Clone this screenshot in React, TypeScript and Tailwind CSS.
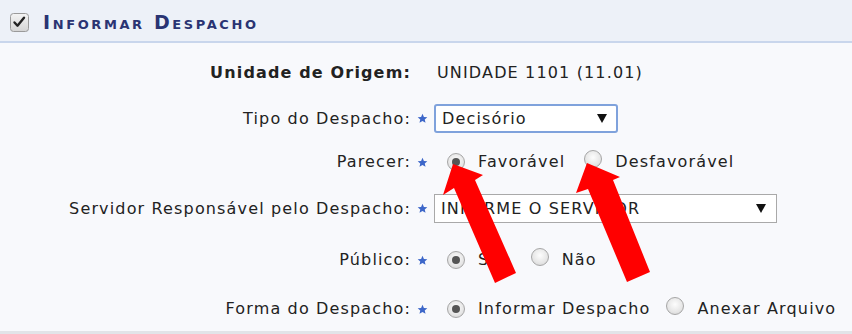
import React from "react";

const font = { fontFamily: '"DejaVu Sans", Verdana, sans-serif' };

function Star() {
  return (
    <svg width="11" height="11" viewBox="0 0 24 24" className="shrink-0">
      <path
        d="M12 1.5l3.1 7 7.4.6-5.6 4.9 1.7 7.4L12 17.5l-6.6 3.9 1.7-7.4L1.5 9.1l7.4-.6z"
        fill="#3d67c9"
      />
    </svg>
  );
}

function Radio({ checked }: { checked?: boolean }) {
  return (
    <span className="relative inline-flex h-[18px] w-[18px] shrink-0 items-center justify-center rounded-full border border-[#a6a6a6] bg-[radial-gradient(circle_at_50%_40%,#fdfdfd_0%,#e6e6e6_60%,#cfcfcf_100%)]">
      {checked && <span className="h-[8px] w-[8px] rounded-full bg-[#555]" />}
    </span>
  );
}

function Caret() {
  return (
    <svg width="10" height="9" viewBox="0 0 10 9" className="shrink-0">
      <path d="M0 0h10L5 9z" fill="#111" />
    </svg>
  );
}

function Row({
  label,
  h,
  bold,
  star = true,
  children,
}: {
  label: string;
  h: string;
  bold?: boolean;
  star?: boolean;
  children: React.ReactNode;
}) {
  return (
    <div className={`flex items-center ${h}`}>
      <div
        className={`w-[411px] shrink-0 text-right ${bold ? "font-bold" : ""}`}
      >
        {label}
      </div>
      <div className="flex w-[23px] shrink-0 items-center justify-center">
        {star && <Star />}
      </div>
      <div className="flex items-center">{children}</div>
    </div>
  );
}

export default function App() {
  return (
    <div
      className="relative h-[334px] w-[852px] overflow-hidden bg-[#f8f9fc] text-[16px] tracking-[1.15px] text-[#222]"
      style={font}
    >
      <div className="flex h-[43px] items-center border-b-2 border-[#c9d6ec] bg-[#edf1f8] pl-[10px] pt-[3px]">
        <svg width="19" height="19" viewBox="0 0 19 19" className="shrink-0">
          <defs>
            <linearGradient id="cb" x1="0" y1="0" x2="0" y2="1">
              <stop offset="0" stopColor="#f4f4f4" />
              <stop offset="1" stopColor="#d4d4d4" />
            </linearGradient>
          </defs>
          <rect x="0.5" y="0.5" width="18" height="18" rx="3" fill="url(#cb)" stroke="#9a9a9a" />
          <path d="M4.5 9.5l3 3.2 6.5-8" fill="none" stroke="#222" strokeWidth="2.4" strokeLinecap="round" strokeLinejoin="round" />
        </svg>
        <span className="ml-[14px] text-[19px] font-bold tracking-[2.6px] text-[#2a3473] [font-variant:small-caps]">
          Informar Despacho
        </span>
      </div>

      <div className="pt-[8px]">
        <Row label="Unidade de Origem:" h="h-[44px]" bold star={false}>
          <span className="ml-[3px]">UNIDADE 1101 (11.01)</span>
        </Row>
        <Row label="Tipo do Despacho:" h="h-[47px]">
          <div className="flex h-[29px] w-[184px] items-center justify-between rounded-[3px] border-2 border-[#7fa2dc] bg-white pl-[6px] pr-[9px]">
            <span>Decisório</span>
            <Caret />
          </div>
        </Row>
        <Row label="Parecer:" h="h-[40px]">
          <span className="ml-[13px] flex items-center">
            <Radio checked />
            <span className="ml-[13px]">Favorável</span>
            <span className="ml-[19px]">
              <Radio />
            </span>
            <span className="ml-[13px]">Desfavorável</span>
          </span>
        </Row>
        <Row label="Servidor Responsável pelo Despacho:" h="h-[53px]">
          <div className="flex h-[29px] w-[343px] items-center justify-between border border-[#a9a9a9] bg-white pl-[6px] pr-[10px]">
            <span>INFORME O SERVIDOR</span>
            <Caret />
          </div>
        </Row>
        <Row label="Público:" h="h-[50px]">
          <span className="ml-[13px] flex items-center">
            <Radio checked />
            <span className="ml-[13px]">Sim</span>
            <span className="ml-[19px]">
              <Radio />
            </span>
            <span className="ml-[13px]">Não</span>
          </span>
        </Row>
        <Row label="Forma do Despacho:" h="h-[48px]">
          <span className="ml-[13px] flex items-center">
            <Radio checked />
            <span className="ml-[13px]">Informar Despacho</span>
            <span className="ml-[16px]">
              <Radio />
            </span>
            <span className="ml-[13px]">Anexar Arquivo</span>
          </span>
        </Row>
      </div>
      <div className="absolute bottom-0 left-0 h-[3px] w-full bg-[#e2e4e8]" />

      <svg
        className="pointer-events-none absolute left-0 top-0"
        width="852"
        height="334"
        viewBox="0 0 852 334"
      >
        <polygon
          points="453,164 483,175 475,180 516,273 495,283 454,188 443,195"
          fill="#ff0000"
        />
        <polygon
          points="587,163 620,177 613,180 650,272 627,282 588,189 576,193"
          fill="#ff0000"
        />
      </svg>
    </div>
  );
}
